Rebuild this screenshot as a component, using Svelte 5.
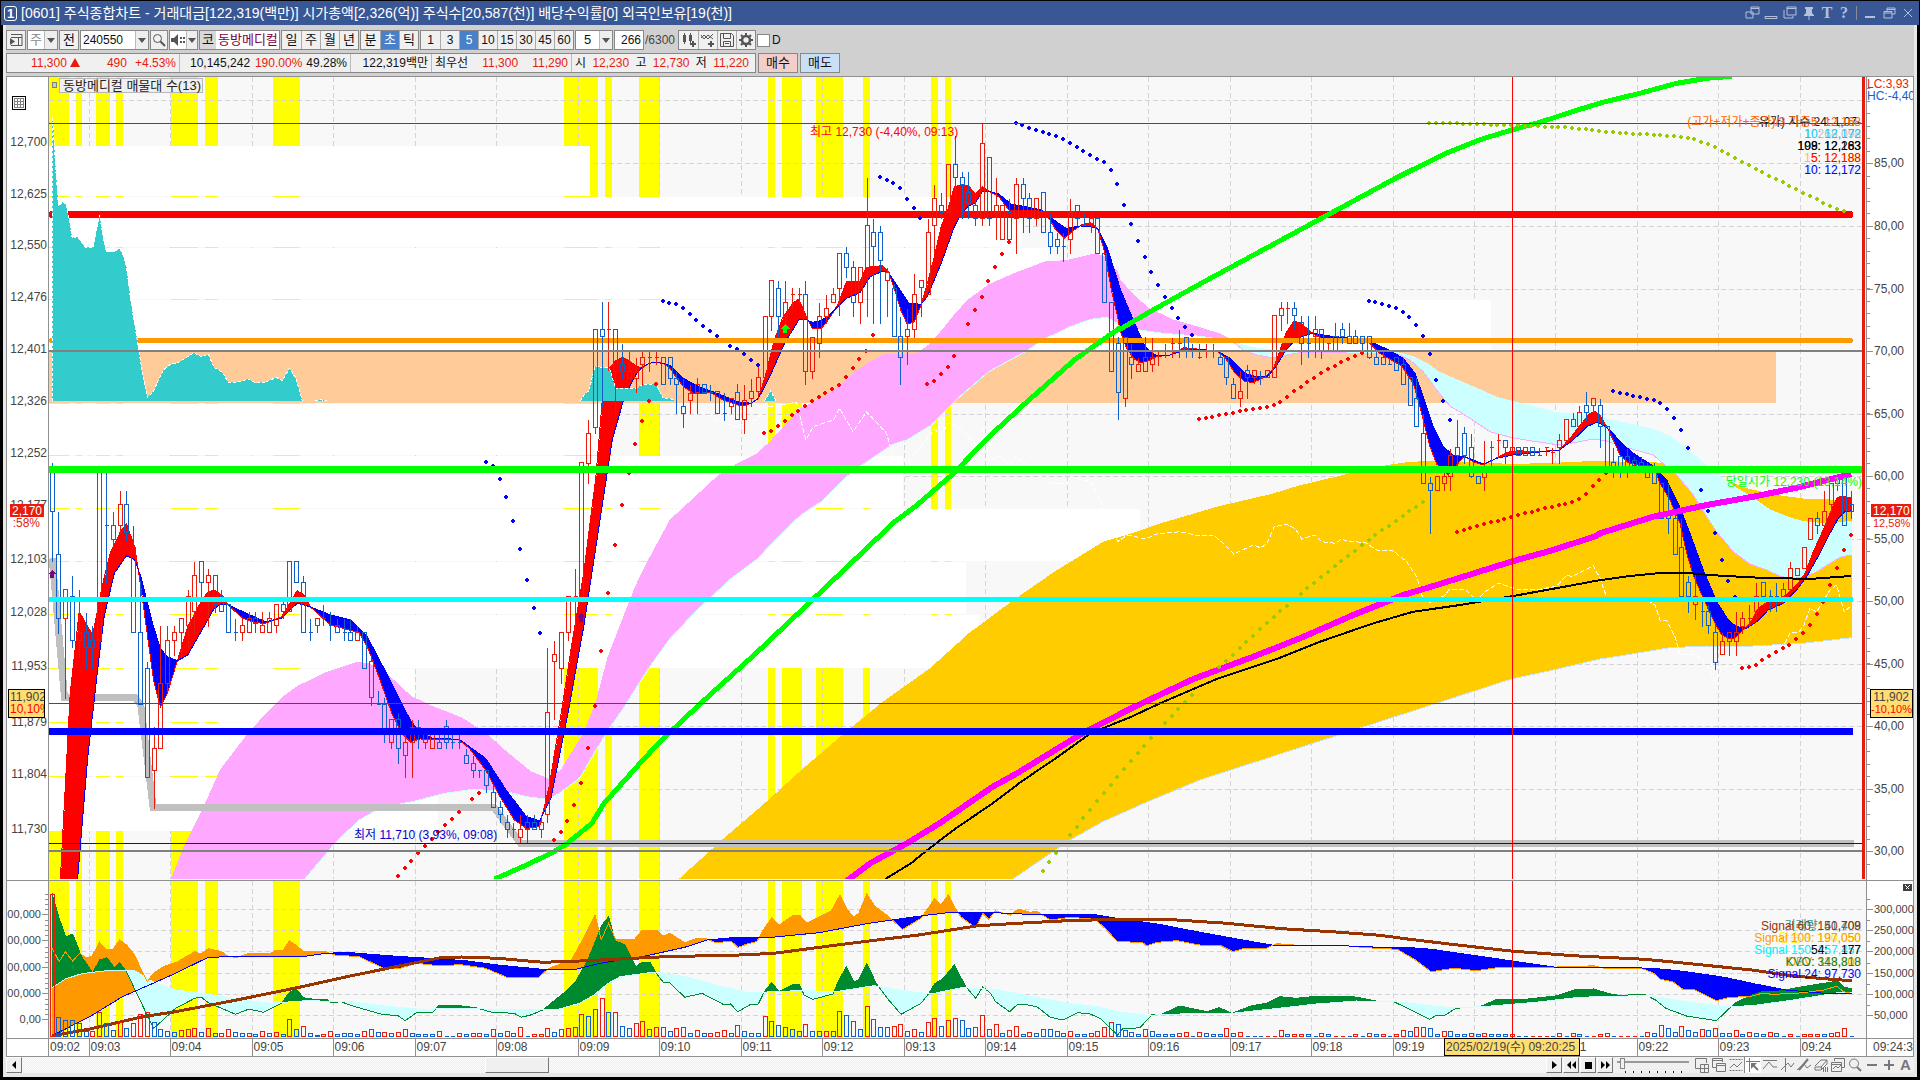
<script lang="ts">
	type Point = [number, number];

	// origin x, origin y and horizontal density of each plot section; vertical density is always 3
	const sections: Record<string, [number, number, number]> = {
		a: [0, 440, 2.45],
		b: [0, 70, 2.45],
		c: [560, 70, 2.45],
		d: [1120, 280, 3],
		e: [1520, 340, 3],
		f: [560, 440, 2.45],
		g: [0, 860, 2.45],
		h: [620, 860, 2.01],
		k: [1380, 860, 2.904],
		t: [1640, 0, 3]
	};

	function points(parts: [string, string][]): Point[] {
		const out: Point[] = [];
		for (const [key, text] of parts) {
			const [x0, y0, kx] = sections[key];
			for (const pair of text.trim().split(/\s+/)) {
				const [x, y] = pair.split(',').map(Number);
				out.push([x0 + x / kx, y0 + y / 3]);
			}
		}
		return out;
	}

	function linePath(pts: Point[]) {
		return 'M' + pts.map(([x, y]) => `${x.toFixed(1)} ${y.toFixed(1)}`).join('L');
	}

	function valueAt(pts: Point[], x: number) {
		for (let i = 1; i < pts.length; i++) {
			if (x <= pts[i][0]) {
				const [x1, y1] = pts[i - 1];
				const [x2, y2] = pts[i];
				return x2 === x1 ? y2 : y1 + ((x - x1) / (x2 - x1)) * (y2 - y1);
			}
		}
		return pts[pts.length - 1][1];
	}

	// fills between two lines, split by which one is on top
	function ribbon(fast: Point[], slow: Point[]) {
		let up = '';
		let down = '';
		const last = Math.min(fast[fast.length - 1][0], slow[slow.length - 1][0]);
		for (let x = Math.round(Math.max(fast[0][0], slow[0][0])); x < last; x++) {
			const f = Math.round(valueAt(fast, x));
			const s = Math.round(valueAt(slow, x));
			if (f < s) up += `M${x} ${f}h1V${s}h-1z`;
			else if (f > s) down += `M${x} ${s}h1V${f}h-1z`;
		}
		return { up, down, fast: linePath(fast), slow: linePath(slow) };
	}

	const step = 6.79;
	const barX = (i: number) => Math.round(51.7 + i * step) + 0.5;

	// direction high top bottom low
	const candleRuns: [number, string][] = [
		[440, `d 65 80 213 363;d 213 343 535 578;u 448 448 535 775;d 405 469 601 622;u 447 577 601 650;d 515 577 622 685;d 555 601 622 685;u 90 90 601 601;d 90 256 256 430;u 213 256 298 320;u 150 193 256 280;d 150 193 277 300;d 256 322 577 577;d 420 577 793 793;d 663 685 1012 1012;u 858 925 991 1103;u 555 730 925 925;u 555 601 730 750;u 555 577 601 645;u 535 535 577 650;u 448 469 555 620;u 363 406 514 577;d 363 363 427 470;u 385 406 427 557;d 405 405 493 515;d 447 469 514 514;d 493 493 577 577;d 535 577 577 601;u 535 556 577 601;u 514 535 577 577;d 514 535 550 577;u 514 556 577 577;u 514 535 577 577;u 493 493 556 577;d 469 493 514 535;u 363 363 514 514;d 363 363 427 427;d 406 427 577 577;d 535 577 577 601;u 535 535 556 577;u 493 535 535 556;d 514 556 556 601;d 535 556 577 577;d 535 577 577 601;d 535 577 601 601;u 556 577 601 601;d 577 577 685 685;d 643 664 772 795;d 750 793 793 793;d 772 793 883 905;u 838 838 905 925;d 817 838 925 970;u 880 905 946 1012;u 838 860 905 1012;d 838 862 883 925;u 860 883 905 925;u 883 883 925 925;d 862 905 925 925;d 838 858 905 925;d 883 905 905 925;d 883 905 905 925;d 925 946 970 970;d 946 970 991 1012;d 990 990 990 1012;d 990 990 1036 1057;d 1036 1057 1102 1102;d 1080 1102 1123 1145;d 1123 1145 1168 1190;d 1145 1168 1168 1190;u 1123 1168 1190 1210;d 1123 1145 1168 1210;d 1123 1145 1168 1168;u 1123 1145 1168 1190;u 622 817 1123 1145;u 601 643 664 838;u 577 577 685 730;u 469 469 577 601;u 383 469 469 577;u 67 67 485 485;u -62 -20 68 130`],
		[70, `u 778 778 1070 1090;d 693 778 799 1008;u 693 778 778 900;d 778 778 902 1030;d 820 883 902 925;u 840 902 923 925;u 860 902 923 965;u 840 862 883 946;u 840 862 862 902;u 840 862 862 883;d 862 862 943 943;d 862 862 923 943;d 902 923 943 1028;d 925 1007 1028 1070;u 943 970 990 1028;u 920 943 965 1028;d 940 943 965 965;d 943 965 965 990;d 963 963 1028 1028;d 965 1028 1028 1050;u 985 985 1007 1028;d 940 965 1048 1048;u 943 990 1048 1090;u 923 963 985 1007;u 880 922 963 985;u 737 737 922 922;u 631 631 737 780;d 631 653 737 800;u 631 695 737 780;u 652 673 673 715;u 652 673 673 695;d 631 673 902 943;u 800 800 902 923;u 695 737 820 862;u 673 715 737 760;u 652 673 695 695;u 550 550 653 735;d 528 550 592 620;d 570 592 695 737;u 592 592 695 758;u 320 466 592 737;d 445 487 529 758;d 465 487 571 758;u 590 605 631 737;d 640 653 799 799;d 737 799 862 943;u 715 778 799 883;u 610 673 778 800;u 631 631 652 737;u 445 487 673 673;u 343 385 466 550;d 365 406 427 445;u 283 283 427 427;d 195 283 322 390;d 302 322 343 443;d 302 365 400 443;d 365 406 445 466;u 160 220 445 466;d 262 262 445 466;u 322 406 427 508;u 406 406 508 508;d 385 427 508 508;u 322 343 445 550;d 322 343 385 487;d 365 385 445 487;u 385 385 445 466;d 365 365 487 487;d 430 487 529 550;d 487 508 529 550;d 487 529 529 572;u 385 427 508 550;d 406 406 445 466;d 427 466 466 466;u 427 445 460 487;d 430 445 550 550;d 550 550 695 695;d 693 695 902 902;d 799 820 965 1048;u 800 800 985 1008;d 820 862 883 923;u 860 883 902 902;d 799 862 902 902;u 800 862 883 902;u 841 841 841 885;u 820 841 841 860;u 800 820 820 862;u 778 820 820 862;d 800 800 841 862`],
		[280, `d 190 210 210 232;d 190 232 232 234;u 190 212 212 232;u 190 212 212 232;d 212 232 253 253;d 232 232 292 313;d 292 313 355 355;u 270 334 355 377;d 252 271 292 355;u 271 271 292 310;d 270 292 292 313;u 271 271 292 292;u 105 105 292 292;u 63 85 106 150;u 63 85 85 130;d 63 85 106 148;d 105 127 190 253;d 105 190 190 232;u 105 148 168 232;d 148 148 210 234;u 190 190 190 210;d 127 168 210 212;d 127 148 168 190;d 127 168 190 190;d 148 168 190 190;d 168 168 190 210;d 168 168 232 234;d 205 232 253 253;d 210 232 253 253;d 232 253 253 253;d 232 232 271 271;d 232 252 313 313;d 292 292 376 376;d 292 355 439 439;d 400 460 610 610;d 588 610 631 758;u 588 588 631 631;u 570 588 610 631;u 505 526 588 631;d 418 502 526 555;d 438 460 526 550;d 460 502 588 590;d 588 588 610 610;u 480 570 590 631;u 480 502 502 555;u 460 481 481 530;d 481 481 502 550;u 480 502 515 550;d 502 502 526 526;d 502 502 526 526;d 502 502 526 526;d 502 526 526 526;u 502 502 502 526;u 502 516 516 550;u 460 481 502 550;u 418 418 481 481;d 397 418 439 439;u 376 397 439 455;d 334 376 397 420;u 355 355 376 397;d 355 376 439 502`],
		[340, `d 258 258 378 378;d 322 367 390 410;d 347 347 390 410;d 325 347 390 410;d 347 360 375 390;d 347 367 390 390;d 367 387 410 410;d 367 387 430 430;d 430 430 535 535;d 430 514 535 578;d 514 535 643 643;d 535 622 769 769;d 706 727 769 815;u 700 769 793 836;d 769 814 814 857;d 793 814 856 878;d 850 877 965 986;u 877 902 943 943;u 877 877 902 945;u 814 877 902 945;u 814 835 857 878;u 793 835 835 857;u 727 769 814 836;d 727 727 769 769;d 748 769 769 814;d 727 769 769 814;u 727 748 769 790;u 664 685 748 748;u 685 685 706 706;u 622 622 685 685;u 535 535 598 598;d 514 535 556 578;u 450 514 556 556;u 430 430 493 514;u 400 415 430 450;d 400 400 556 556;d 450 493 514 535`]
	];

	const candles: Record<string, string> = { u: '', d: '' };
	let index = 0;
	for (const [origin, rows] of candleRuns) {
		for (const row of rows.split(';')) {
			const [dir, ...raw] = row.split(' ');
			const [hi, top, bot, lo] = raw.map((v) => Math.round(origin + Number(v) / 3) + 0.5);
			const x = barX(index++);
			candles[dir] += `M${x} ${hi}V${top}M${x} ${bot}V${lo}M${x - 2} ${top}h4V${bot}h-4z`;
		}
	}

	const volumes = `r103 b472 b481 b481 b490 b514 r514 r455 b490 b511 r487 b505 r490 r463 r455 b487 b508 b514 b517 r511 r508 r505 b517 r505 b520 r520 r508 b517 b520 r520 b523 r514 b520 r517 b523 r478 b508 r499 b520 b526 r523 r514 b523 b520 b520 b523 r514 r508 b517 r517 b520 r517 r508 b520 b523 b523 b523 r514 b527 b527 r520 b523 r520 r520 b523 r508 b520 r514 b520 r502 b527 r523 r523 r505 b517 r508 r505 r502 r463 b469 r448 r415 b457 r455 b499 b505 r490 r484 b508 r502 r502 b514 r505 r502 b520 r511 b520 r520 r517 r511 b520 r496 b514 b520 b520 r469 b484 b496 b502 b508 b514 r493 b514 b514 r514 b514 r454 b466 b484 b508 r439 b478 b502 b502 r499 r493 b514 r508 b517 r487 r475 b499 r481 r475 b481 b505 r502 r466 b508 r493 b520 r511 r499 b523 r517 b520 b508 b508 b514 b520 r514 b523 b523 r520 r514 r502 r487 b493 b511 b517 b523 r508 b514 b523 b523 b523 r520 r517 b527 r517 b520 b523 b523 r505 b520 r517 b527 b527 b527 r527 r527 r511 b523 r523 r523 b523 b527 r520 b523 r527 r527 b527 r523 b527 r520 b523 r523 b527 r523 r511 b514 r502 r502 b505 b523 r514 b514 b523 b523 r520 b523 r520 b523 b523 b523 r523 b527 b527 r527 r527 r527 b527 r520 b527 r520 b523 b527 r527 r523 r520 b527 r527 r527 r527 b527 r517 b520 r496 b505 b517 r499 b511 b517 r508 b511 r505 b520 b520 r511 b523 r517 b520 b523 r517 b520 b527 r523 b527 r523 r523 r523 b523 r520 r517 r505 b527`;
	const volumeBars: Record<string, string> = { r: '', b: '' };
	volumes.split(' ').forEach((token, i) => {
		const top = Math.round(860 + Number(token.slice(1)) / 3) + 0.5;
		volumeBars[token[0]] += `M${barX(i) - 2} 1036.5V${top}h4V1036.5z`;
	});

	const maFast = points([
		['a', '148,1317 172,760 194,515 227,585 250,440 270,340 295,275 310,252 330,320 345,440 376,720 393,800 410,760 435,660 460,560 495,480 510,455 525,450 543,465 560,497 595,535 625,548 650,550 690,530 710,490 728,452 745,465 760,500 810,555 880,578 900,620 925,700 960,820 985,880 1005,905 1030,897 1125,900 1150,925 1190,990 1225,1070 1260,1140 1290,1165 1322,1160 1345,1040 1375,820 1400,620 1430,400 1460,110'],
		['b', '1475,1000 1490,900 1508,872 1525,862 1545,875 1560,890'],
		['c', '203,893 218,880 236,877 253,880 268,893 285,922 302,950 330,972 370,968 400,990 435,1005 452,1007 469,1000 486,985 505,910 525,810 545,745 570,700 585,687 602,735 618,775 640,777 660,745 680,705 702,635 735,633 751,592 790,587 805,605 820,660 835,720 851,763 868,755 885,705 900,640 917,560 934,470 951,415 966,350 984,344 1001,348 1018,372 1035,350 1050,363 1075,380 1100,420 1130,422 1170,420 1195,440 1215,480 1235,505 1260,480 1280,463 1300,458 1317,475 1333,540 1351,660 1366,740'],
		['d', '0,150 20,205 40,235 62,248 85,243 110,230 150,225 190,203 230,207 290,213 315,232 345,280 375,305 400,307 435,292 460,268 480,210 500,155 523,122 545,132 584,165 605,175 630,185 690,178 745,185 780,220 845,258 880,310 905,400 930,500 950,552 985,585 1010,555 1033,528 1060,545 1090,555 1115,542 1160,517 1200,512 1240,516 1318,510 1350,475 1385,430 1410,400 1425,395 1440,405 1460,440 1480,480'],
		['e', '300,345 325,368 355,375 400,378 420,430 450,480 480,550 500,640 520,705 550,775 580,840 605,885 625,895 645,895 670,870 690,850 715,805 735,790 770,775 800,765 830,735 855,700 880,635 905,580 930,520 950,475 965,468 994,474']
	]);
	const maSlow = points([
		['a', '148,1900 190,1317 215,950 240,680 255,530 280,400 310,347 330,360 345,410 376,560 393,625 410,650 435,662 460,645 495,570 525,505 543,492 560,495 595,515 650,545 690,535 728,490 760,500 810,525 860,540 900,590 960,730 1005,840 1030,880 1060,895 1125,898 1190,955 1240,1050 1290,1130 1322,1142 1350,1075 1390,830 1430,560 1470,240 1500,0'],
		['b', '1530,980 1560,910'],
		['c', '203,890 218,880 236,877 268,885 302,925 340,950 385,970 435,995 469,1000 486,985 510,930 550,820 585,750 602,748 618,757 640,752 660,735 680,710 702,685 735,668 760,620 790,604 805,608 830,655 855,700 885,703 900,680 934,580 966,470 984,430 1001,408 1018,398 1035,365 1050,363 1075,372 1105,402 1140,410 1180,420 1210,450 1240,475 1275,468 1300,470 1317,475 1340,530 1366,630'],
		['d', '0,25 40,120 75,200 110,228 150,225 190,212 230,208 290,212 330,235 375,280 410,290 440,290 465,265 495,215 523,182 545,170 575,160 630,168 690,175 745,182 800,207 850,235 885,280 910,350 940,440 970,500 1000,525 1033,530 1060,540 1090,552 1130,535 1180,525 1240,518 1318,510 1360,480 1400,440 1430,427 1450,435 1480,460'],
		['e', '300,305 340,340 400,378 440,420 475,490 510,580 550,690 590,785 625,840 650,860 680,865 710,845 745,810 790,790 830,750 860,710 900,640 930,580 955,535 975,515 994,512']
	]);
	const cloudA = points([
		['a', '420,1317 455,1210 500,1100 540,990 615,870 690,775 728,740 795,700 876,667 905,672 950,705 1008,770 1060,800 1130,833 1190,880 1240,935 1300,995 1345,1018 1375,990 1400,940 1430,880 1460,790 1490,650'],
		['f', '185,440 215,365 270,240 350,150 390,105 430,75 485,40 515,5'],
		['c', '590,1015 650,980 690,945 720,910 760,875 800,852 870,855 910,820 950,760 970,730 1000,690 1050,645 1110,612 1190,575 1240,572 1310,552 1335,560 1365,605'],
		['d', '0,0 40,45 85,85 160,120 230,140 300,162 330,178 370,210 410,225 450,232 470,232 500,225 540,218 700,218 830,220 870,240 910,275 950,330 990,378 1050,415 1110,455 1175,473 1250,485 1318,495 1380,485 1420,477 1460,483 1500,497'],
		['e', '400,345 440,380 470,405 520,465 560,530 590,575 640,635 690,672 740,690 780,708 810,715 850,713 890,695 930,670 960,652 994,645']
	]);
	const cloudB = points([
		['a', '420,1900 747,1317 820,1210 880,1140 935,1102 1010,1085 1090,1060 1160,1048 1240,1055 1290,1070 1340,1078 1370,1060 1420,1015 1460,930 1490,870 1530,800 1568,725'],
		['f', '220,680 270,595 340,505 420,415 480,360 540,285 590,225 640,185 700,112 740,75'],
		['c', '815,1123 850,1110 910,1065 970,990 1050,905 1140,845 1190,805 1250,770 1300,748 1340,742'],
		['d', '0,135 60,150 130,160 230,168 300,177 340,187 400,203 460,210 600,214 760,218 830,217 880,230 920,250 955,275 1000,295 1070,325 1130,352 1200,370 1310,398 1400,405 1500,425'],
		['e', '400,268 450,290 500,325 550,370 600,410 650,445 700,475 750,510 800,530 850,545 900,550 994,545']
	]);
	const goldA = points([
		['f', '290,1317 400,1195 500,1090 590,990 690,885 790,785 905,685 1000,580 1110,480 1210,395 1330,305 1400,280'],
		['d', '0,772 120,730 290,680 460,640 530,618 680,582 800,555 870,545 960,543 1180,552 1310,548 1440,542'],
		['e', '300,365 430,368 500,385 600,415 680,445 770,465 860,477 994,480']
	]);
	const goldB = points([
		['f', '290,2200 1110,1317 1250,1200 1330,1145 1440,1085 1568,1020'],
		['d', '1175,1197 1310,1168 1440,1137 1500,1128'],
		['e', '450,923 560,918 700,918 850,910 994,893']
	]);
	const flowFast = points([
		['g', '128,265 145,305 160,275 178,303 195,280 210,292 225,290 244,247 260,267 277,267 293,240 310,255 327,280 345,325 361,365 376,340 400,320 435,305 477,275 493,282 510,266 543,275 560,290 580,292 610,280 660,282 677,270 692,273 709,243 725,255 743,275 795,274 820,285 880,290 940,325 975,327 1020,310 1075,317 1130,314 1190,325 1240,351 1320,351 1345,325 1400,300 1425,245 1458,165 1473,240 1491,190 1508,237'],
		['h', '0,237 30,237 45,210 73,210 87,228 100,220 130,248 155,235 175,237 190,247 225,245 237,262 260,250 275,245 290,205 305,174 320,195 350,165 362,167 375,190 425,152 442,105 455,145 470,172 480,160 496,102 512,138 540,170 568,208 605,175 632,117 645,135 660,105 672,140 685,170 715,203 729,160 741,178 755,153 785,165 800,147 825,157 838,154 865,180 905,172 955,178 975,205 1000,245 1050,247 1058,257 1080,247 1120,242 1165,255 1205,255 1232,275 1255,265 1295,267 1320,251 1380,258 1450,256 1500,263'],
		['k', '50,268 100,298 148,335 215,325 280,332 340,323 500,323 535,318 570,320 620,317 650,325 760,325 795,340 815,358 850,365 880,388 915,390 977,422 1010,413 1080,408 1110,400 1140,403 1210,400 1290,390 1327,378 1345,395 1370,400']
	]);
	const flowSlow = points([
		['g', '128,527 220,470 300,410 375,370 430,340 510,292 600,289 735,291 800,280 850,277 950,287 1050,295 1140,302 1220,315 1320,327 1410,328 1470,310'],
		['h', '0,300 45,290 130,262 175,240 225,233 290,234 400,218 500,190 570,175 620,165 665,157 735,157 850,165 950,163 1010,178 1080,192 1160,215 1240,237 1310,255 1450,257'],
		['k', '0,262 75,262 150,268 250,283 350,298 430,310 510,322 760,324 830,328 900,337 1000,352 1090,372 1180,390 1290,400 1370,400']
	]);
	const kvoFast = points([
		['g', '128,103 145,175 161,232 178,222 200,290 227,338 244,300 262,293 280,323 293,308 310,335 335,400 376,505 395,485 430,445 477,415 493,411 510,428 543,445 577,463 610,447 645,457 690,430 709,397 726,387 743,413 770,418 800,418 812,428 835,425 870,440 935,463 975,467 993,482 1020,458 1060,457 1075,437 1110,435 1165,443 1205,457 1260,460 1277,472 1300,465 1330,450 1385,395 1410,365 1440,300 1475,195 1491,170 1508,245'],
		['h', '0,247 10,255 32,320 45,306 60,306 73,340 87,367 100,368 130,412 165,400 210,435 222,432 237,455 260,435 278,432 290,395 305,367 320,395 345,375 360,372 370,405 388,418 428,402 440,360 455,320 470,365 480,360 496,310 515,370 540,420 565,463 605,430 620,402 632,372 650,355 672,315 695,380 715,415 729,380 745,400 755,425 783,455 800,432 820,435 838,440 865,472 890,480 920,458 945,462 965,475 1000,525 1010,507 1045,503 1070,463 1090,462 1125,438 1180,455 1205,443 1230,460 1270,437 1300,430 1325,410 1360,415 1400,409 1475,410 1520,423'],
		['k', '40,425 80,445 145,478 165,465 185,468 220,445 290,440 340,418 430,417 510,408 570,388 620,387 670,402 700,407 740,403 770,404 800,420 830,445 890,468 977,482 1030,430 1080,405 1110,395 1150,395 1200,385 1330,363 1350,383 1370,385']
	]);
	const kvoSlow = points([
		['g', '128,383 160,357 200,341 260,332 330,332 375,365 430,390 510,403 580,418 660,430 750,422 860,425 960,440 1030,448 1130,445 1270,450 1370,447 1420,430 1455,405 1490,370'],
		['h', '0,350 70,336 130,350 200,378 260,398 330,394 370,391 430,396 510,377 570,392 625,402 690,382 760,390 830,410 900,430 960,440 1000,455 1060,466 1160,460 1230,460 1310,447 1400,432 1480,423'],
		['k', '0,424 70,427 170,440 220,443 300,440 450,427 580,412 670,409 770,407 830,415 900,427 1010,440 1080,437 1200,420 1330,398 1370,398']
	]);

	const ma = ribbon(maFast, maSlow);
	const cloud = ribbon(cloudA, cloudB);
	const gold = ribbon(goldA, goldB);
	const flow = ribbon(flowFast, flowSlow);
	const kvo = ribbon(kvoFast, kvoSlow);

	const silver = linePath(points([['a', '128,355 158,772 330,772 345,795 375,1102 1210,1102 1275,1210 4541,1210']]));
	const greenLine = linePath(points([
		['a', '1212,1317 1290,1275 1350,1240 1385,1215 1420,1180 1450,1150 1480,1090 1568,970'],
		['f', '245,905 345,790 480,640 575,530 700,385 820,245 870,200 960,105 1040,5'],
		['c', '1060,1090 1140,1000 1260,870 1370,775'],
		['d', '0,148 90,95 180,45 262,0'],
		['t', '-954,654 -732,534 -585,461 -480,419 -385,390 -291,364 -200,334 -108,306 0,280 110,250 200,235 275,229']
	]));
	const magentaLine = linePath(points([
		['f', '700,1325 760,1270 850,1210 930,1150 1060,1040 1120,1000 1280,880 1400,805'],
		['d', '220,1197 400,1130 540,1075 700,1005 850,945 950,915 1180,843 1300,810 1430,767'],
		['e', '240,580 400,530 560,495 700,470 830,443 994,402']
	]));
	const blackLine = linePath(points([
		['f', '797,1317 860,1270 900,1230 970,1165 1060,1090 1130,1025 1220,950 1300,880 1400,830 1470,790'],
		['d', '290,1197 470,1137 600,1085 760,1030 880,995 1020,975 1180,948 1350,917 1430,902'],
		['e', '330,708 420,699 500,699 600,707 750,715 880,716 994,708']
	]));
	const brownLine = linePath(points([
		['g', '128,527 220,507 350,470 430,455 580,420 740,380 850,350 950,325 1080,293 1130,291 1220,295 1330,307 1420,303'],
		['h', '0,297 90,290 240,285 310,280 410,260 500,243 600,225 720,197 820,188 900,182 1000,178 1110,179 1220,190 1330,206 1430,215'],
		['k', '0,226 80,237 200,252 380,273 560,287 770,298 900,311 1080,330 1200,348 1290,356 1370,362']
	]));
	const laggingLine = linePath(points([
		['c', '345,1025 385,1050 430,1070 480,1050 510,1010 580,997 602,1110 620,1070 670,1050 685,1015 718,1085 751,1025 800,1090 815,1155 850,1180 890,1120 917,1078 934,1095 951,1060 985,1080 1020,1125 1035,1075 1052,1168 1080,1160 1100,1185 1118,1160 1160,1200 1200,1240 1240,1240 1255,1220 1300,1235 1330,1310'],
		['f', '1366,305 1390,285'],
		['d', '25,765 75,777 110,762 180,755 240,768 280,765 310,790 341,822 400,795 421,803 440,793 463,740 500,733 525,745 545,777 584,765 605,785 646,790 664,778 690,785 735,787 770,810 820,813 860,845 890,890 910,960 931,967 950,952 970,950 990,927 1035,927 1070,963 1093,937 1135,910 1190,927'],
		['e', '0,748 60,748 110,738 140,705 155,710 220,677 240,715 260,772 370,773 405,795 420,840 440,842 465,890 480,942 530,945 560,975 586,1023 605,985 640,975 690,960 710,925 790,918 810,880 835,877 850,860 870,805 890,815 930,750 950,735 973,815 994,797']
	]));
	const tealAreas = [
		points([['b', '128,993 128,140 131,180 135,270 143,408 155,395 163,405 177,503 190,500 208,531 228,531 236,480 244,435 250,480 260,546 280,545 291,535 300,548 310,590 320,690 335,800 345,880 361,983 375,965 400,900 415,885 440,875 475,849 493,860 510,853 525,893 543,905 560,937 580,937 608,927 625,938 650,937 677,922 692,932 709,895 725,925 741,993']]),
		points([['b', '772,993 785,989 800,993']]),
		points([['c', '50,993 60,972 71,962 86,887 103,893 121,893 136,955 185,955 205,943 236,943 253,985 268,985 282,993']]),
		points([['c', '501,993 516,962 529,993']])
	].map(linePath);

	const blueDots = points([
		['a', '1191,66 1208,78 1225,117 1240,171 1257,243 1274,327 1291,420 1308,504 1323,579'],
		['c', '252,692 267,698 284,702 301,714 319,732 334,750 350,768 367,783 385,798 417,828 434,838 451,852 468,870 486,885 784,321 801,330 816,339 833,354 851,387 867,414 882,444 1118,158 1132,165 1149,174 1166,180 1183,186 1198,191 1215,198 1232,207 1249,219 1266,231 1281,243 1298,255 1316,267 1333,276 1349,300 1365,342 1382,405 1398,462 1416,513 1433,561 1448,606'],
		['d', '114,15 135,51 156,84 174,114 195,141 216,165 747,63 765,66 786,72 807,77 828,84 849,96 867,111 888,135 909,168 930,222 948,300 969,363 990,420'],
		['e', '279,153 300,159 321,162 339,168 360,171 381,177 402,180 420,189 441,207 462,234 483,270 504,324 543,450 564,513 585,579 606,660 624,723 645,770']
	]);
	const redDots = points([
		['a', '975,1308 992,1284 1007,1263 1024,1239 1041,1218 1058,1197 1073,1177 1090,1155 1107,1137 1124,1116 1156,1077 1173,1059 1357,1200 1374,1176 1389,1143 1406,1095 1423,1029 1440,924 1458,799 1472,633 1490,459 1507,315 1524,195 1541,98 1556,12'],
		['c', '201,1053 218,993 236,943 500,1089 517,1083 534,1068 551,1053 568,1035 583,1023 600,1008 618,993 634,981 649,968 666,957 683,945 701,921 718,894 733,867 750,843 767,795 899,942 916,933 934,912 951,891 965,858 999,762 1017,720 1034,681 1049,633 1066,591 1083,552 1101,516'],
		['d', '237,417 258,413 276,411 297,405 318,402 339,399 360,393 378,390 399,387 420,384 441,380 462,375 480,366 501,351 522,333 543,321 561,306 582,294 603,279 624,267 645,258 663,246 684,237 705,228 726,219 1011,756 1032,750 1050,744 1071,738 1092,732 1113,726 1134,723 1152,717 1173,711 1194,705 1215,699 1236,696 1254,690 1275,684 1296,681 1317,675 1335,672 1356,666 1377,657 1398,642 1419,618 1437,600 1458,580'],
		['e', '666,984 687,981 708,975 726,960 747,948 768,936 789,924 807,915 828,897 849,879 870,855 891,822 909,787 930,735 951,684 972,630 993,585']
	]);
	const oliveDots = points([
		['f', '1183,1293 1198,1266 1215,1239 1249,1185 1266,1161 1281,1134 1298,1110 1315,1083 1332,1059 1350,1035 1365,1011 1382,987 1398,963 1416,939 1432,918 1448,894 1482,849 1499,828 1514,807 1531,786 1548,765'],
		['d', '297,1161 318,1143 339,1125 360,1104 378,1086 399,1068 420,1047 441,1029 462,1011 480,993 501,978 543,942 561,924 582,909 603,891 624,876 645,858 663,843 684,828 705,813 726,795 747,780 765,765 786,750 807,738 828,723 849,708 867,693 888,681 909,666'],
		['t', '-632,368 -611,369 -591,369 -571,370 -550,370 -530,371 -510,372 -489,372 -469,373 -448,374 -428,374 -408,375 -387,376 -367,376 -346,377 -326,378 -306,379 -285,380 -265,380 -245,381 -224,382 -204,384 -183,386 -163,388 -143,391 -122,393 -102,395 -82,397 -61,399 -41,400 -20,401 0,402 21,402 42,405 60,405 81,408 102,408 123,411 144,414 162,417 183,426 204,432 225,441 246,453 264,462 285,474 306,486 327,495 348,507 366,516 387,528 408,537 429,546 447,558 468,567 489,579 510,588 531,597 549,609 570,618 591,627 612,634']
	]);
	const dotSets = [
		{ color: '#99cc00', dots: oliveDots },
		{ color: '#ff0000', dots: redDots },
		{ color: '#0000ff', dots: blueDots }
	].map(({ color, dots }) => ({
		color,
		d: dots.map(([x, y]) => `M${Math.round(x) - 1} ${Math.round(y) - 2}h2v1h1v2h-1v1h-2v-1h-1v-2h1z`).join('')
	}));

	const signalDays = [[49, 20], [76, 6], [96, 14], [116, 7], [171, 27], [205, 13], [273, 27], [564, 34], [605, 7], [639, 21], [768, 7], [782, 20], [816, 27], [863, 7], [931, 7], [945, 6]];
	const profileBands = [
		[146, 50, 541], [197, 50, 973], [248, 51, 999], [300, 51, 1442], [351, 52, 1727, '#ffcc99'], [404, 51, 563], [456, 52, 854],
		[509, 52, 1091], [562, 52, 917], [615, 53, 931], [669, 53, 366], [723, 53, 428], [777, 54, 389]
	] as [number, number, number, string?][];

	const minutes = Array.from({ length: 22 }, (_, i) => ({
		x: Math.round(89 + i * 81.47) + 0.5,
		label: `09:${String(i + 3).padStart(2, '0')}`
	}));
	const rates = Array.from({ length: 12 }, (_, i) => ({ y: Math.round(163.4 + i * 62.55), label: `${85 - i * 5},00` }));
	const minorTicks = Array.from({ length: 63 }, (_, i) => Math.round(88 + i * 12.51) + 0.5);
	const prices: [string, number][] = [['12,700', 142], ['12,625', 194], ['12,550', 245], ['12,476', 297], ['12,401', 349], ['12,326', 401], ['12,252', 453], ['12,177', 505], ['12,103', 559], ['12,028', 612], ['11,953', 666], ['11,879', 722], ['11,804', 774], ['11,730', 829]];
	const volumeScale: [string, number][] = [['300,000', 909], ['250,000', 930], ['200,000', 951], ['150,000', 973], ['100,000', 994], ['50,000', 1015]];
	const volumeLeft: [string, number][] = [['00,000', 914], ['00,000', 940], ['00,000', 967], ['00,000', 993], ['0,00', 1019]];

	const hLines: [number, number, string, number][] = [
		[214, 7, '#ff0000', 1853], [340, 5, '#ff9900', 1853], [351, 2, '#808080', 1862], [469, 7, '#00ff00', 1862],
		[599, 5, '#00ffff', 1853], [731, 7, '#0000ff', 1853], [851, 2, '#808080', 1862]
	];

	const mainNotes: [number, string, string][] = [
		[126, '#111', '유가) 지수 24: 1,07-'], [126, '#ff6600', '(고가+저가+종가)/3 가중5: 12,168'],
		[138, '#c0c0c0', '1: 268,098'], [138, '#00ccff', '10: 12,172'],
		[150, '#111', '199: 12,283'], [150, '#000', '108: 12,163'],
		[162, '#ffcc00', '15: 12,188'], [162, '#ff0000', '5: 12,188'],
		[174, '#bfe0ff', '30: 12,192'], [174, '#0000ff', '10: 12,172']
	];
	const subNotes: [number, string, string][] = [
		[930, '#339999', '거래량: 41,408'], [930, '#993300', 'Signal 60: 150,709'],
		[942, '#ffee00', '단순 3: 190,050'], [942, '#ff9900', 'Signal 100: 197,050'],
		[954, '#00eeff', 'Signal 150: 257,457'], [954, '#000', '54:    177'],
		[966, '#ff9900', 'OBV: 113,300'], [966, '#008a30', 'KVO: 348,818'],
		[978, '#0000ff', 'Signal 24: 97,730']
	];

	let period = $state('초');
	let interval = $state('5');
	let code = $state('240550');
	let count = $state('266');
	let daily = $state(false);
	let speed = $state(5);
	const periods = [['일', '주', '월', '년'], ['분', '초', '틱']];
	const intervals = ['1', '3', '5', '10', '15', '30', '45', '60'];
</script>

<div class="window">
	<header class="titlebar">
		<span class="num">1</span>
		<h1>[0601] 주식종합차트 - 거래대금[122,319(백만)] 시가총액[2,326(억)] 주식수[20,587(천)] 배당수익률[0] 외국인보유[19(천)]</h1>
		<nav class="winbtns">
			<button aria-label="link"><svg viewBox="0 0 16 16"><path d="M7 2h8v7H7zM7 3.5h8M2 7h7v6H2z" /></svg></button>
			<button aria-label="dock"><svg viewBox="0 0 16 16"><path d="M2 11.5h12v2H2z" /></svg></button>
			<button aria-label="cascade"><svg viewBox="0 0 16 16"><path d="M5 2h9v8H5zM5 3.5h9M2 5v8h9v-2" /></svg></button>
			<button aria-label="pin"><svg viewBox="0 0 16 16"><path class="solid" d="M4 2h8v2h-1v4l2 2v1H3v-1l2-2V4H4z" /><path d="M8 11v4" /></svg></button>
			<button class="glyph" aria-label="text">T</button>
			<button class="glyph" aria-label="help">?</button>
			<i></i>
			<button aria-label="minimize"><svg viewBox="0 0 16 16"><path class="solid" d="M3 11h10v2H3z" /></svg></button>
			<button aria-label="restore"><svg viewBox="0 0 16 16"><path d="M6 3h8v6h-3M6 4.5h8M6 3v3M3 6.5h8V13H3zM3 8h8" /></svg></button>
			<button aria-label="close"><svg viewBox="0 0 16 16"><path d="M4 4l8 8M12 4l-8 8" /></svg></button>
		</nav>
	</header>

	<main>
		<div class="toolbar">
			<button class="box w20" aria-label="panel"><svg viewBox="0 0 16 16"><path d="M3 2.5h11v11H3M3 5.5h11M10.5 5.5v8" /><path class="solid" d="M2 6l5 3.5L2 13z" /></svg></button>
			<div class="combo"><button class="face dim">주</button><button class="arrow" aria-label="open list"></button></div>
			<button class="box w20">전</button>
			<div class="combo codebox"><input aria-label="종목코드" bind:value={code} /><button class="arrow" aria-label="open codes"></button></div>
			<button class="box w18" aria-label="search"><svg viewBox="0 0 16 16"><circle cx="6.5" cy="6.5" r="4" /><path class="thick" d="M9.5 9.5l4.5 4.5" /></svg></button>
			<div class="combo"><button class="face spk" aria-label="sound"><svg viewBox="0 0 16 16"><path class="solid" d="M1 6h3l4-4v12L4 10H1zM10 5h2v2h-2zM10 9h2v2h-2zM13 5h2v2h-2zM13 9h2v2h-2z" /></svg></button><button class="arrow small" aria-label="sound options"></button></div>
			<div class="stock"><b>코</b><span>동방메디컬</span></div>
			{#each periods as group}
				<div class="group">
					{#each group as name}
						<button class:on={period === name} onclick={() => (period = name)}>{name}</button>
					{/each}
				</div>
			{/each}
			<div class="group nums">
				{#each intervals as name}
					<button class:on={interval === name} onclick={() => (interval = name)}>{name}</button>
				{/each}
			</div>
			<div class="combo tickbox"><button class="face">5</button><button class="arrow" aria-label="open ticks"></button></div>
			<input class="count" aria-label="봉 개수" bind:value={count} />
			<span class="total">/6300</span>
			<div class="group tools">
				<button aria-label="add candles"><svg viewBox="0 0 16 16"><path class="solid" d="M2 3h3v7H2zM8 3h3v6H8z" /><path d="M3.5 1v11M9.5 1v10" /><path class="thick" d="M12 9v6M9 12h6" /></svg></button>
				<button aria-label="add indicator"><svg viewBox="0 0 16 16"><path d="M1 6l3-3 4 4 5-5M1 3l3 4 4-4 5 4" /><path class="thick" d="M11 9v6M8 12h6" /></svg></button>
				<button aria-label="save"><svg viewBox="0 0 16 16"><path d="M1.5 1.5h11l2 2v11h-13zM4.5 1.5v5h7v-5M4.5 14V9.5h7V14M6 11.5h4" /></svg></button>
				<button aria-label="settings"><svg viewBox="0 0 16 16"><circle cx="8" cy="8" r="4" stroke-width="2.5" /><path class="thick" d="M8 1v3M8 12v3M1 8h3M12 8h3M3 3l2 2M11 11l2 2M13 3l-2 2M5 11l-2 2" /></svg></button>
			</div>
			<label class="daily"><input type="checkbox" bind:checked={daily} />D</label>
		</div>

		<div class="quotebar">
			<div class="quote">
				<div class="cell c1 up"><span>11,300</span><i class="tri"></i><span class="grow">490</span><span>+4.53%</span></div>
				<div class="cell c2"><span>10,145,242</span><span class="up ratio">190.00%</span><span>49.28%</span></div>
				<div class="cell c3"><span>122,319백만</span></div>
				<div class="cell c4"><span>최우선</span><span class="up">11,300</span><span class="up">11,290</span></div>
				<div class="cell c5"><span>시</span><span class="up">12,230</span><span>고</span><span class="up">12,730</span><span>저</span><span class="up">11,220</span></div>
			</div>
			<button class="order buy">매수</button>
			<button class="order sell">매도</button>
		</div>

		<svg class="pane" viewBox="6 76 1908 804" role="img" aria-label="동방메디컬">
			<defs>
				<clipPath id="plot"><rect x="49" y="77" width="1814" height="802" /></clipPath>
			</defs>
			<rect x="6" y="76" width="1908" height="804" fill="#fff" />
			<rect x="49" y="77" width="1817" height="803" fill="#f8f8f8" />
			<g clip-path="url(#plot)">
				{#each signalDays as [x, w]}
					<rect {x} y="77" width={w} height="803" fill="#ffff00" />
				{/each}
				<path class="grid" d={minutes.map((m) => `M${m.x} 77V880`).join('')} />
				<path class="grid" d={[100, ...rates.map((r) => r.y)].map((y) => `M49 ${y + 0.5}H1862`).join('')} />
				{#each profileBands as [y, h, w, fill]}
					<rect x="49" {y} width={w} height={h} fill={fill ?? '#fff'} />
				{/each}
				<path d={gold.up} fill="#ffcc00" />
				<path d={gold.slow} class="thin" stroke="#c8e4ff" />
				<path d={cloud.up} fill="#ffa8ff" />
				<path d={cloud.down} fill="#ccffff" />
				<path d={cloud.fast} class="thin" stroke="#ffa8ff" />
				<path d={cloud.slow} class="thin" stroke="#ccffff" />
				<path d={silver} class="thin" stroke="#c0c0c0" stroke-width="7" />
				<path d={ma.up} fill="#ff0000" />
				<path d={ma.down} fill="#0000ff" />
				<path d={ma.fast} class="thin" stroke="#ff0000" />
				<path d={ma.slow} class="thin" stroke="#0000ff" />
				{#each hLines.slice(0, 2) as [y, h, fill, end]}
					<rect x="49" y={y - (h - 1) / 2} width={end - 49} height={h} rx="3" {fill} />
				{/each}
				{#each tealAreas as d}
					<path {d} fill="#33cccc" />
					<path {d} class="thin" stroke="#fff" stroke-dasharray="3 2" />
				{/each}
				<path d={candles.u} class="thin" stroke="#e81c0c" />
				<path d={candles.d} class="thin" stroke="#1060cc" />
				<path d={laggingLine} class="thin" stroke="#fff" stroke-dasharray="5 2" />
				<path d={blackLine} class="thin" stroke="#000" stroke-width="2" />
				<path d={magentaLine} class="thin" stroke="#ff00ff" stroke-width="6" />
				<path d={greenLine} class="thin" stroke="#00ff00" stroke-width="5" />
				{#each dotSets as set}
					<path d={set.d} fill={set.color} />
				{/each}
				{#each hLines.slice(2) as [y, h, fill, end]}
					<rect x="49" y={Math.floor(y - (h - 1) / 2)} width={end - 49} height={h} {fill} />
				{/each}
				<path class="thin" stroke="#ff0000" d="M49 123.5H1862M49 703.5H1862M1512.5 77V880" />
				<path class="thin" stroke="#0000ff" d="M49 843.5H1862" />
				<path d="M52 570l4 4h-2v4h-4v-4h-2zM581 613l4 4h-2v5h-4v-5h-2z" fill="#800080" />
				<path d="M785 324l5 5h-3v4h-4v-4h-3z" fill="#00ff00" />
			</g>
			<rect x="1862" y="77" width="3" height="802" fill="#e81c0c" />
			<path class="thin" stroke="#909090" d="M6 76.5H1914M6.5 76V880M48.5 77V880M1866.5 77V880M1913.5 76V880" />
			<path class="thin" stroke="#909090" d={minorTicks.map((y) => `M1867 ${y}h3`).join('') + rates.map((r) => `M1867 ${r.y + 0.5}h6`).join('')} />

			<rect x="59.5" y="78.5" width="143" height="14" fill="#f0f0f0" stroke="#b8b8b8" />
			<text x="63" y="90" class="name">동방메디컬 매물대 수(13)</text>
			<rect x="52.5" y="82.5" width="4" height="5" fill="#c8c8c8" stroke="#808080" />
			<rect x="12.5" y="96.5" width="13" height="13" fill="#fff" stroke="#000" />
			<path class="thin" stroke="#808080" d="M14.5 98.5h9v9h-9zM14.5 101.5h9M14.5 104.5h9M17.5 98v10M20.5 98v10" />

			{#each prices as [label, y]}
				<text x="47" y={y + 4} class="end axis">{label}</text>
			{/each}
			{#each rates as r}
				<text x="1874" y={r.y + 4} class="axis">{r.label}</text>
			{/each}
			<text x="1867" y="88" fill="#e81c0c">LC:3,93</text>
			<svg x="1867" y="90" width="46" height="14"><text x="0" y="10" fill="#1060cc">HC:-4,40</text></svg>

			<rect x="10" y="504" width="34" height="13" fill="#e81c0c" />
			<text x="42" y="515" class="end" fill="#fff">2,170</text>
			<text x="40" y="527" class="end" fill="#e81c0c">:58%</text>
			<rect x="8.5" y="689.5" width="36" height="28" fill="#ffdd70" stroke="#000" />
			<svg x="9" y="690" width="35" height="28">
				<text x="1" y="11" class="axis">11,902</text>
				<text x="1" y="23" fill="#ff0000">10,10%</text>
			</svg>
			<rect x="1871" y="504" width="40" height="13" fill="#e81c0c" />
			<text x="1873" y="515" fill="#fff">12,170</text>
			<text x="1873" y="527" class="small" fill="#e81c0c">12,58%</text>
			<rect x="1870.5" y="689.5" width="42" height="28" fill="#ffdd70" stroke="#000" />
			<text x="1909" y="701" class="end axis">11,902</text>
			<text x="1912" y="713" class="end small" fill="#ff0000">-10,10%</text>

			<text x="810" y="136" fill="#ff0000">최고 12,730 (-4,40%, 09:13)</text>
			<text x="354" y="839" fill="#0000cc">최저 11,710 (3,93%, 09:08)</text>
			<text x="1862" y="486" class="end" fill="#00ff00">당일시가 12,230 (13,14%)</text>
			{#each mainNotes as [y, fill, label]}
				<text x="1861" {y} class="end" {fill}>{label}</text>
			{/each}
		</svg>

		<svg class="pane" viewBox="6 880 1908 177" role="img" aria-label="거래량">
			<defs>
				<clipPath id="sub"><rect x="49" y="881" width="1814" height="157" /></clipPath>
			</defs>
			<rect x="6" y="880" width="1908" height="177" fill="#fff" />
			<rect x="49" y="881" width="1817" height="157" fill="#f8f8f8" />
			<g clip-path="url(#sub)">
				{#each signalDays as [x, w]}
					<rect {x} y="880" width={w} height="158" fill="#ffff00" />
				{/each}
				<path class="grid" d={minutes.map((m) => `M${m.x} 881V1038`).join('')} />
				<path class="grid" d={volumeScale.map(([, y]) => `M49 ${y + 0.5}H1862`).join('')} />
				<path d={flow.up} fill="#ff9900" />
				<path d={flow.down} fill="#0000ff" />
				<path d={kvo.up} fill="#008a30" />
				<path d={kvo.down} fill="#ccffff" />
				<path d={kvo.fast} class="thin" stroke="#008a30" />
				<path d={kvo.slow} class="thin" stroke="#ccffff" />
				<path d={flow.fast} class="thin" stroke="#ff9900" />
				<path d={flow.slow} class="thin" stroke="#0000ff" />
				<path d={brownLine} class="thin" stroke="#993300" stroke-width="3" />
				<path d={volumeBars.r} class="thin" stroke="#e81c0c" />
				<path d={volumeBars.b} class="thin" stroke="#1060cc" />
				<path class="thin" stroke="#ff0000" d="M1512.5 881V1038" />
			</g>
			{#each subNotes as [y, fill, label]}
				<text x="1861" {y} class="end" {fill}>{label}</text>
			{/each}
			<path class="thin" stroke="#909090" d="M6 880.5H1914M6.5 880V1057M48.5 881V1056M1866.5 881V1056M1913.5 880V1057M6 1038.5H1914M6 1056.5H1914" />
			<path class="thin" stroke="#909090" d={minutes.map((m) => `M${m.x} 1038V1056`).join('') + volumeScale.map(([, y]) => `M1867 ${y + 0.5}h6M1867 ${y - 9.5}h3`).join('') + volumeLeft.map(([, y]) => `M42 ${y + 0.5}h6M45 ${y - 4.5}h3M45 ${y - 9.5}h3M45 ${y - 14.5}h3M45 ${y - 19.5}h3`).join('')} />
			{#each volumeLeft as [label, y]}
				<text x="41" y={y + 4} class="end axis small">{label}</text>
			{/each}
			{#each volumeScale as [label, y]}
				<text x="1874" y={y + 4} class="axis small">{label}</text>
			{/each}
			<text x="1873" y="1051" class="axis">09:24:3</text>
			<text x="50" y="1051" class="axis">09:02</text>
			{#each minutes as m}
				<text x={m.x + 1} y="1051" class="axis">{m.label}</text>
			{/each}
			<rect x="1444.5" y="1038.5" width="135" height="17" fill="#ffdd70" stroke="#000" />
			<text x="1446" y="1051" class="axis">2025/02/19(수) 09:20:25</text>
			<rect x="1903" y="884" width="9" height="7" fill="#404040" />
			<path class="thin" stroke="#fff" d="M1905.5 885.5l4 4M1909.5 885.5l-4 4" />
		</svg>

		<footer>
			<button class="raised" aria-label="scroll left"><svg viewBox="0 0 16 16"><path class="solid" d="M10 4v8L6 8z" /></svg></button>
			<div class="track"><span class="lead"></span><button class="thumb" aria-label="scroll position"></button><span class="rest"></span></div>
			<div class="player">
				<button class="raised" aria-label="play"><svg viewBox="0 0 16 16"><path class="solid" d="M6 4v8l5-4z" /></svg></button>
				<button class="raised" aria-label="back"><svg viewBox="0 0 16 16"><path class="solid" d="M8 4v8L4 8zM13 4v8L9 8z" /></svg></button>
				<button class="raised" aria-label="stop"><svg viewBox="0 0 16 16"><path class="solid" d="M5 5h7v7H5z" /></svg></button>
				<button class="raised" aria-label="forward"><svg viewBox="0 0 16 16"><path class="solid" d="M4 4v8l4-4zM9 4v8l4-4z" /></svg></button>
			</div>
			<div class="speed"><input type="range" min="0" max="100" bind:value={speed} aria-label="재생 속도" /></div>
			<div class="draw">
				<button aria-label="add pane"><svg viewBox="0 0 16 16"><path d="M7 11.5H1.5v-10h11V6M6.5 7.5h8v8h-8zM10.5 8v7M7 11.5h7" /></svg></button>
				<button aria-label="copy pane"><svg viewBox="0 0 16 16"><path d="M5 10.5H1.5v-9h10V5M2 3.5h9M5.5 6.5h9v8h-9zM6 8.5h8" /></svg></button>
				<button aria-label="fit"><svg viewBox="0 0 16 16"><path d="M1.5 2.5h13M1.5 13.5h13" stroke-dasharray="2 1" /><path d="M2 11l4-4 3 3 5-5" /></svg></button>
				<button class="picked" aria-label="cursor"><svg viewBox="0 0 16 16"><path d="M4.5 1v14M1 4.5h14" /><path class="solid" d="M6 6h6l-6 6z" /><path class="thick" d="M8 8l5 5" /></svg></button>
				<button aria-label="horizontal line"><svg viewBox="0 0 16 16"><path d="M1 3.5h14M1 12l6-7 4 5h4" /></svg></button>
				<button aria-label="vertical line"><svg viewBox="0 0 16 16"><path d="M6.5 1v14M2 13l7-7 3 4 3-4" /></svg></button>
				<button aria-label="trend line"><svg viewBox="0 0 16 16"><path class="thick" d="M3 13L12 2" /><path d="M1 13l7-6 3 4 4-3" /></svg></button>
				<button aria-label="erase"><svg viewBox="0 0 16 16"><path d="M2 9l6-6h6l-6 7H2v3h6l6-6V3M8.5 10v3M10.5 10v5M12.5 10v5M14.5 10v5" /></svg></button>
				<button aria-label="charts"><svg viewBox="0 0 16 16"><path d="M4.5 4V1.5h10v9H12M1.5 5.5h10v9h-10zM2 7.5h9M3 12l3-3 2 2 3-3" /></svg></button>
				<button aria-label="magnify"><svg viewBox="0 0 16 16"><circle cx="7" cy="6.5" r="4.5" /><path class="thick" d="M10 10l4 4" /></svg></button>
				<button aria-label="zoom out"><svg viewBox="0 0 16 16"><path class="solid" d="M3 7h10v2H3z" /></svg></button>
				<button aria-label="zoom in"><svg viewBox="0 0 16 16"><path class="solid" d="M3 7h10v2H3zM7 3h2v10H7z" /></svg></button>
				<button class="letter" aria-label="auto">A</button>
			</div>
		</footer>
	</main>
</div>

<style>
	:global(body) {
		background: #000;
	}
	.window {
		padding: 1px 1px 3px;
		font-family: 'Liberation Sans', 'Noto Sans CJK KR', sans-serif;
		font-size: 13px;
		color: #111;
	}
	button,
	input {
		font: inherit;
		color: inherit;
		margin: 0;
		padding: 0;
		border: 0;
		border-radius: 0;
		background: none;
		box-sizing: border-box;
	}
	button {
		display: flex;
		align-items: center;
		justify-content: center;
		line-height: 16px;
	}
	button svg {
		width: 16px;
		height: 16px;
		flex: none;
		fill: none;
		stroke: currentColor;
	}
	.solid {
		fill: currentColor;
		stroke: none;
	}
	.thick {
		stroke-width: 2;
	}
	.titlebar {
		height: 24px;
		display: flex;
		align-items: center;
		background: #3a5795;
		color: #fff;
		padding: 0 3px;
	}
	.num {
		width: 11px;
		line-height: 13px;
		border: 1px solid #fff;
		border-radius: 3px;
		text-align: center;
		font-weight: bold;
	}
	h1 {
		flex: 1;
		margin: 0 0 0 4px;
		font-size: 14px;
		font-weight: normal;
		line-height: 20px;
		white-space: nowrap;
	}
	.winbtns {
		display: flex;
		align-items: center;
		gap: 3px;
		color: #b4c0dc;
	}
	.winbtns i {
		width: 1px;
		height: 14px;
		background: #8c8c8c;
		margin: 0 2px;
	}
	.winbtns button {
		width: 16px;
	}
	.winbtns .glyph {
		width: 14px;
		font-family: 'Liberation Serif', serif;
		font-size: 16px;
		font-weight: bold;
	}
	main {
		margin: 0 2px;
		background: #d0d0d0;
		border: solid #e8e8e8;
		border-width: 0 3px 4px;
	}
	.toolbar {
		display: flex;
		gap: 1px;
		padding: 5px 0 3px;
		height: 20px;
	}
	.box,
	.combo,
	.stock,
	.group,
	.count {
		border: 1px solid #888;
		background: #f0f0f0;
		display: flex;
		flex: none;
		height: 20px;
		box-sizing: border-box;
	}
	.w20 {
		width: 20px;
	}
	.w18 {
		width: 18px;
	}
	.box svg,
	.spk {
		color: #555;
	}
	.combo {
		background: #fff;
	}
	.face {
		width: 16px;
	}
	.dim {
		color: #888;
	}
	.arrow {
		width: 13px;
		background: #eee;
		border-left: 1px solid #bbb;
	}
	.arrow::after {
		content: '';
		border: solid transparent;
		border-width: 5px 4px 0;
		border-top-color: #555;
	}
	.arrow.small {
		width: 11px;
	}
	.codebox {
		width: 69px;
		font-size: 12px;
	}
	.codebox input {
		flex: 1;
		min-width: 0;
		padding-left: 2px;
	}
	.stock {
		width: 81px;
		background: #fff;
		color: #800040;
		line-height: 17px;
		overflow: hidden;
		white-space: nowrap;
	}
	.stock b {
		width: 16px;
		background: #d8d8d8;
		color: #111;
		font-weight: normal;
		text-align: center;
		margin-right: 2px;
	}
	.group button {
		width: 19px;
		border-left: 1px solid #aaa;
	}
	.group button:first-child {
		border-left: 0;
	}
	.group .on {
		background: #4a80c8;
		color: #fff;
	}
	.nums {
		font-size: 12px;
	}
	.tickbox .face {
		width: 23px;
	}
	.count {
		width: 30px;
		background: #fff;
		font-size: 12px;
		text-align: right;
		padding-right: 2px;
	}
	.total {
		line-height: 20px;
		width: 32px;
		font-size: 12px;
		color: #444;
	}
	.tools {
		color: #555;
	}
	.daily {
		display: flex;
		align-items: center;
		gap: 2px;
		font-size: 12px;
	}
	.daily input {
		appearance: none;
		width: 13px;
		height: 13px;
		background: #fff;
		border: 1px solid #888;
	}
	.daily input:checked {
		background: #4a80c8;
	}
	.quotebar {
		display: flex;
		gap: 2px;
		height: 20px;
		padding-bottom: 3px;
	}
	.quote {
		display: flex;
		width: 750px;
		border: 1px solid #888;
		background: #f0f0f0;
		box-sizing: border-box;
		font-size: 12px;
		line-height: 18px;
	}
	.cell {
		display: flex;
		justify-content: space-between;
		padding: 0 3px;
		border-right: 1px solid #bbb;
		box-sizing: border-box;
		white-space: nowrap;
	}
	.cell:last-child {
		border-right: 0;
	}
	.up {
		color: #e81c0c;
	}
	.tri {
		border: solid transparent;
		border-width: 0 5px 9px;
		border-bottom-color: #e81c0c;
		margin: 4px 0 0 3px;
		height: 0;
	}
	.c1 {
		width: 173px;
		padding-left: 24px;
	}
	.c1 .grow {
		flex: 1;
		text-align: right;
		padding-right: 8px;
	}
	.c2 {
		width: 171px;
		padding-left: 10px;
	}
	.ratio {
		flex: 1;
		text-align: right;
		padding-right: 4px;
	}
	.c3 {
		width: 81px;
		justify-content: flex-end;
	}
	.c4 {
		width: 140px;
	}
	.c5 {
		flex: 1;
		padding-right: 6px;
	}
	.order {
		width: 40px;
		border: 1px solid #888;
	}
	.buy {
		background: #f4cfca;
	}
	.sell {
		background: #c8dff5;
	}
	.pane {
		display: block;
		width: 100%;
		height: auto;
		shape-rendering: crispEdges;
	}
	.pane text {
		font-size: 12px;
		white-space: pre;
	}
	.pane .name {
		font-size: 13px;
		fill: #222;
	}
	.pane .small {
		font-size: 11px;
	}
	.pane .axis {
		fill: #444;
	}
	.pane .end {
		text-anchor: end;
	}
	.thin {
		fill: none;
	}
	.grid {
		fill: none;
		stroke: #d4d4d8;
		stroke-dasharray: 5 3;
	}
	footer {
		display: flex;
		height: 16px;
		background: #f0f0f0;
	}
	.raised {
		width: 16px;
		height: 16px;
		background: #f0f0f0;
		color: #000;
		border: solid #fff;
		border-width: 1px;
		border-right-color: #777;
		border-bottom-color: #777;
	}
	.track {
		flex: 1;
		display: flex;
		background: repeating-conic-gradient(#fff 0 25%, #ececec 0 50%) 0 0 / 2px 2px;
	}
	.lead {
		flex: 463;
	}
	.rest {
		flex: 997;
	}
	.thumb {
		width: 64px;
		height: 16px;
		background: #f0f0f0;
		border: 1px solid #fff;
		border-right-color: #777;
		border-bottom-color: #777;
	}
	.player {
		display: flex;
		gap: 1px;
	}
	.speed {
		width: 80px;
		padding: 0 4px;
		box-sizing: border-box;
		background: repeating-linear-gradient(90deg, transparent 0 7px, #222 7px 8px) 5px 14px / 68px 3px no-repeat;
	}
	.speed input {
		appearance: none;
		display: block;
		width: 100%;
		height: 12px;
		background: linear-gradient(#999, #999) 0 4px / 100% 2px no-repeat;
	}
	.speed input::-webkit-slider-thumb {
		appearance: none;
		width: 5px;
		height: 11px;
		background: #f0f0f0;
		border: 1px solid #888;
	}
	.draw {
		display: flex;
		color: #777;
	}
	.draw button {
		width: 17px;
		height: 16px;
	}
	.draw .picked {
		background: #fff;
		border-left: 1px solid #888;
	}
	.draw .letter {
		font-size: 15px;
		font-weight: bold;
	}
</style>
